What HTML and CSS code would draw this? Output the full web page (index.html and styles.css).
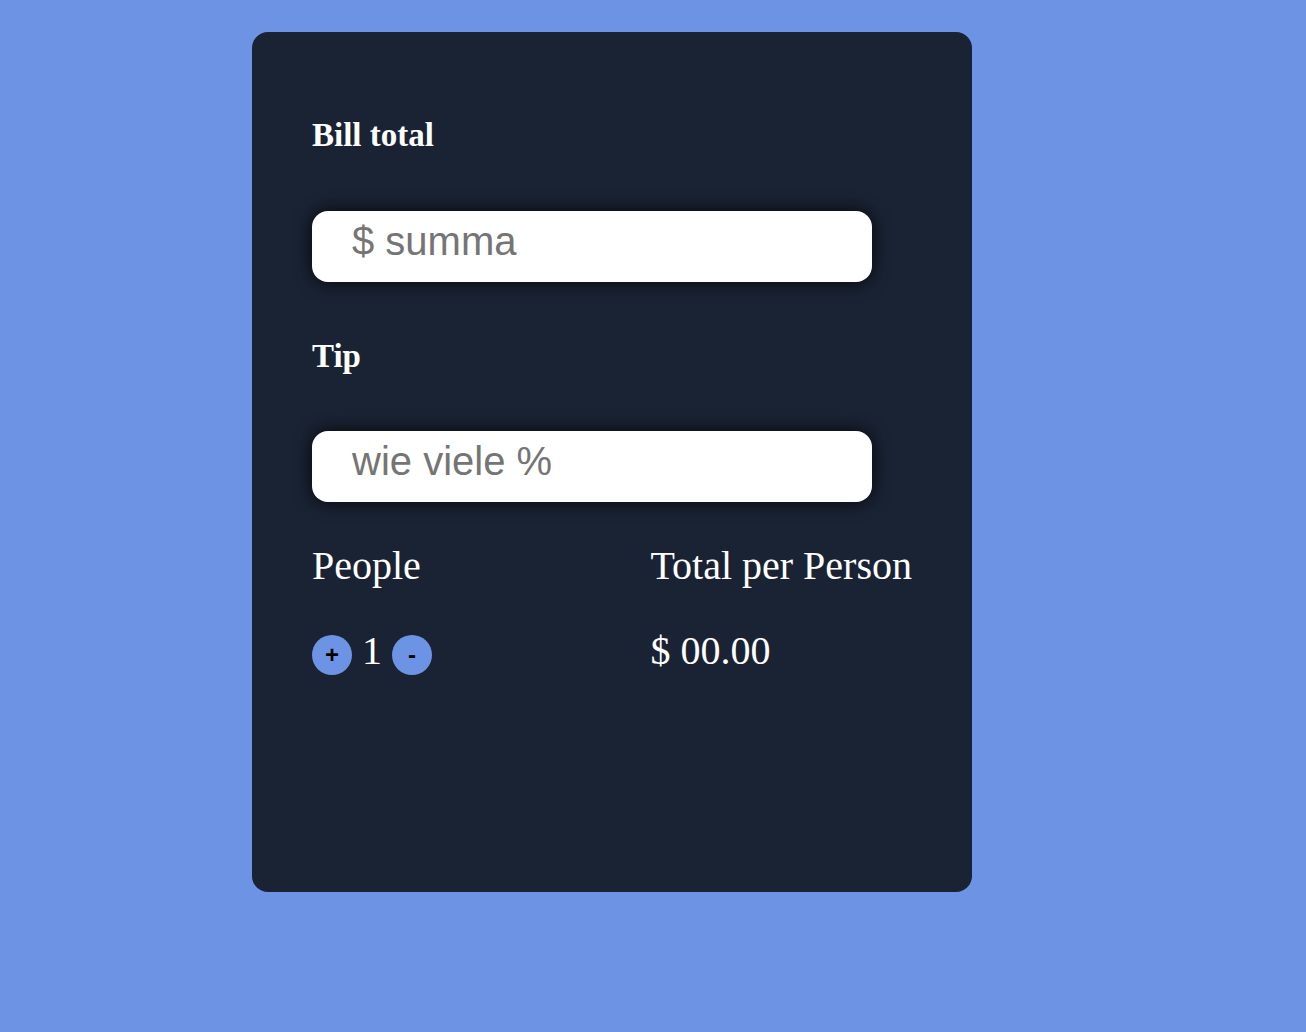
FILE: index.html
```html
<!DOCTYPE html>
<html lang="de">
<head>
<meta charset="utf-8">
<title>Tip Calculator</title>
<link rel="stylesheet" href="styles.css">
</head>
<body>
<main class="card">
  <h2 class="label first">Bill total</h2>
  <input class="field" type="text" placeholder="$ summa">
  <h2 class="label">Tip</h2>
  <input class="field" type="text" placeholder="wie viele %">
  <div class="results">
    <div class="col">
      <div class="col-title">People</div>
      <div class="col-value"><button class="step">+</button> 1 <button class="step">-</button></div>
    </div>
    <div class="col">
      <div class="col-title">Total per Person</div>
      <div class="col-value">$ 00.00</div>
    </div>
  </div>
</main>
</body>
</html>
```
FILE: styles.css
```css
html, body {
  margin: 0;
  padding: 0;
}
body {
  background: #6d94e4;
  min-height: 1032px;
  padding: 32px 0 0 252px;
  box-sizing: border-box;
  font-family: "Liberation Serif", "Times New Roman", serif;
}
.card {
  width: 720px;
  height: 860px;
  box-sizing: border-box;
  background: #1a2334;
  border-radius: 16px;
  padding: 60px 60px;
  color: #fff;
}
.label {
  font-size: 33px;
  font-weight: bold;
  line-height: 37px;
  margin: 56px 0 56px;
}
.label.first {
  margin-top: 25px;
  margin-bottom: 57px;
}
.field {
  display: block;
  width: 560px;
  height: 71px;
  box-sizing: border-box;
  border: none;
  outline: none;
  border-radius: 16px;
  background: #fff;
  padding: 0 0 10px 40px;
  font-family: "Liberation Sans", Arial, sans-serif;
  font-size: 40px;
  color: #333;
  box-shadow: 0 0 18px rgba(0, 0, 0, 0.85);
}
.field::placeholder {
  color: #757575;
}
.results {
  display: flex;
  justify-content: space-between;
  margin-top: 42px;
}
.col {
  display: flex;
  flex-direction: column;
  gap: 41px;
}
.col-title,
.col-value {
  font-size: 40px;
  line-height: 44px;
}
.step {
  width: 40px;
  height: 40px;
  border-radius: 50%;
  border: none;
  padding: 0;
  background: #6d94e4;
  color: #000;
  font-family: "Liberation Sans", Arial, sans-serif;
  font-size: 24px;
  font-weight: bold;
  line-height: 25px;
  vertical-align: 1px;
  cursor: pointer;
}
```
